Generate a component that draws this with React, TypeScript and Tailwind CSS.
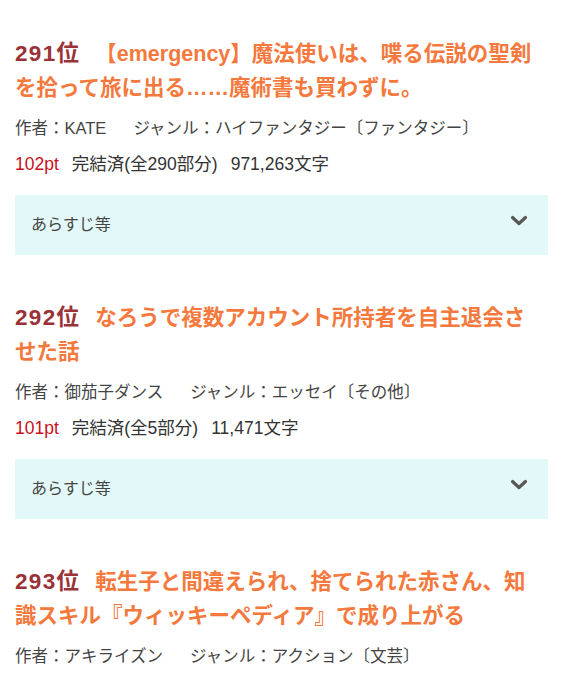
import React from "react";

type Novel = {
  rank: number;
  title: string[];
  author: string;
  genre: string;
  pt?: string;
  status?: string;
  chars?: string;
  summary?: boolean;
};

const novels: Novel[] = [
  {
    rank: 291,
    title: ["【emergency】魔法使いは、喋る伝説の聖剣", "を拾って旅に出る……魔術書も買わずに。"],
    author: "KATE",
    genre: "ハイファンタジー〔ファンタジー〕",
    pt: "102pt",
    status: "完結済(全290部分)",
    chars: "971,263文字",
    summary: true,
  },
  {
    rank: 292,
    title: ["なろうで複数アカウント所持者を自主退会さ", "せた話"],
    author: "御茄子ダンス",
    genre: "エッセイ〔その他〕",
    pt: "101pt",
    status: "完結済(全5部分)",
    chars: "11,471文字",
    summary: true,
  },
  {
    rank: 293,
    title: ["転生子と間違えられ、捨てられた赤さん、知", "識スキル『ウィッキーペディア』で成り上がる"],
    author: "アキライズン",
    genre: "アクション〔文芸〕",
  },
];

function Chevron() {
  return (
    <svg width="18" height="12" viewBox="0 0 18 12" className="block">
      <polyline
        points="2.5,2.5 9,8.5 15.5,2.5"
        fill="none"
        stroke="#585858"
        strokeWidth="3.2"
        strokeLinecap="round"
        strokeLinejoin="round"
      />
    </svg>
  );
}

function Item({ n }: { n: Novel }) {
  return (
    <div className="flex flex-col">
      <div className="text-[21.5px] leading-[34px] font-bold whitespace-nowrap">
        <span className="text-[#9b3237] text-[22.5px] tracking-[1.3px] mr-[15px]">{n.rank}位</span>
        <span className="text-[#f5783c]">
          {n.title[0]}
          <br />
          {n.title[1]}
        </span>
      </div>
      <div className="mt-[11px] h-6 leading-6 text-[16.5px] text-[#444] whitespace-nowrap">
        作者：{n.author}
        <span className="inline-block w-[27px]" />
        ジャンル：{n.genre}
      </div>
      {n.pt && (
        <div className="mt-[12px] h-6 leading-6 text-[17.5px] text-[#333] whitespace-nowrap flex gap-[13px]">
          <span className="text-[#c8101a]">{n.pt}</span>
          <span>{n.status}</span>
          <span>{n.chars}</span>
        </div>
      )}
      {n.summary && (
        <div className="mt-[19px] h-[60px] bg-[#e3f8f8] flex items-center justify-between pl-[16px] pr-[20px]">
          <span className="text-[16px] text-[#444]">あらすじ等</span>
          <span className="-mt-[8px]">
            <Chevron />
          </span>
        </div>
      )}
    </div>
  );
}

export default function App() {
  return (
    <div
      className="w-[563px] h-[680px] overflow-hidden bg-white pl-[15px] pr-[15px] pt-[37px] flex flex-col gap-[46px]"
      style={{ fontFamily: '"Liberation Sans", "Noto Sans CJK JP", sans-serif' }}
    >
      {novels.map((n) => (
        <Item key={n.rank} n={n} />
      ))}
    </div>
  );
}
